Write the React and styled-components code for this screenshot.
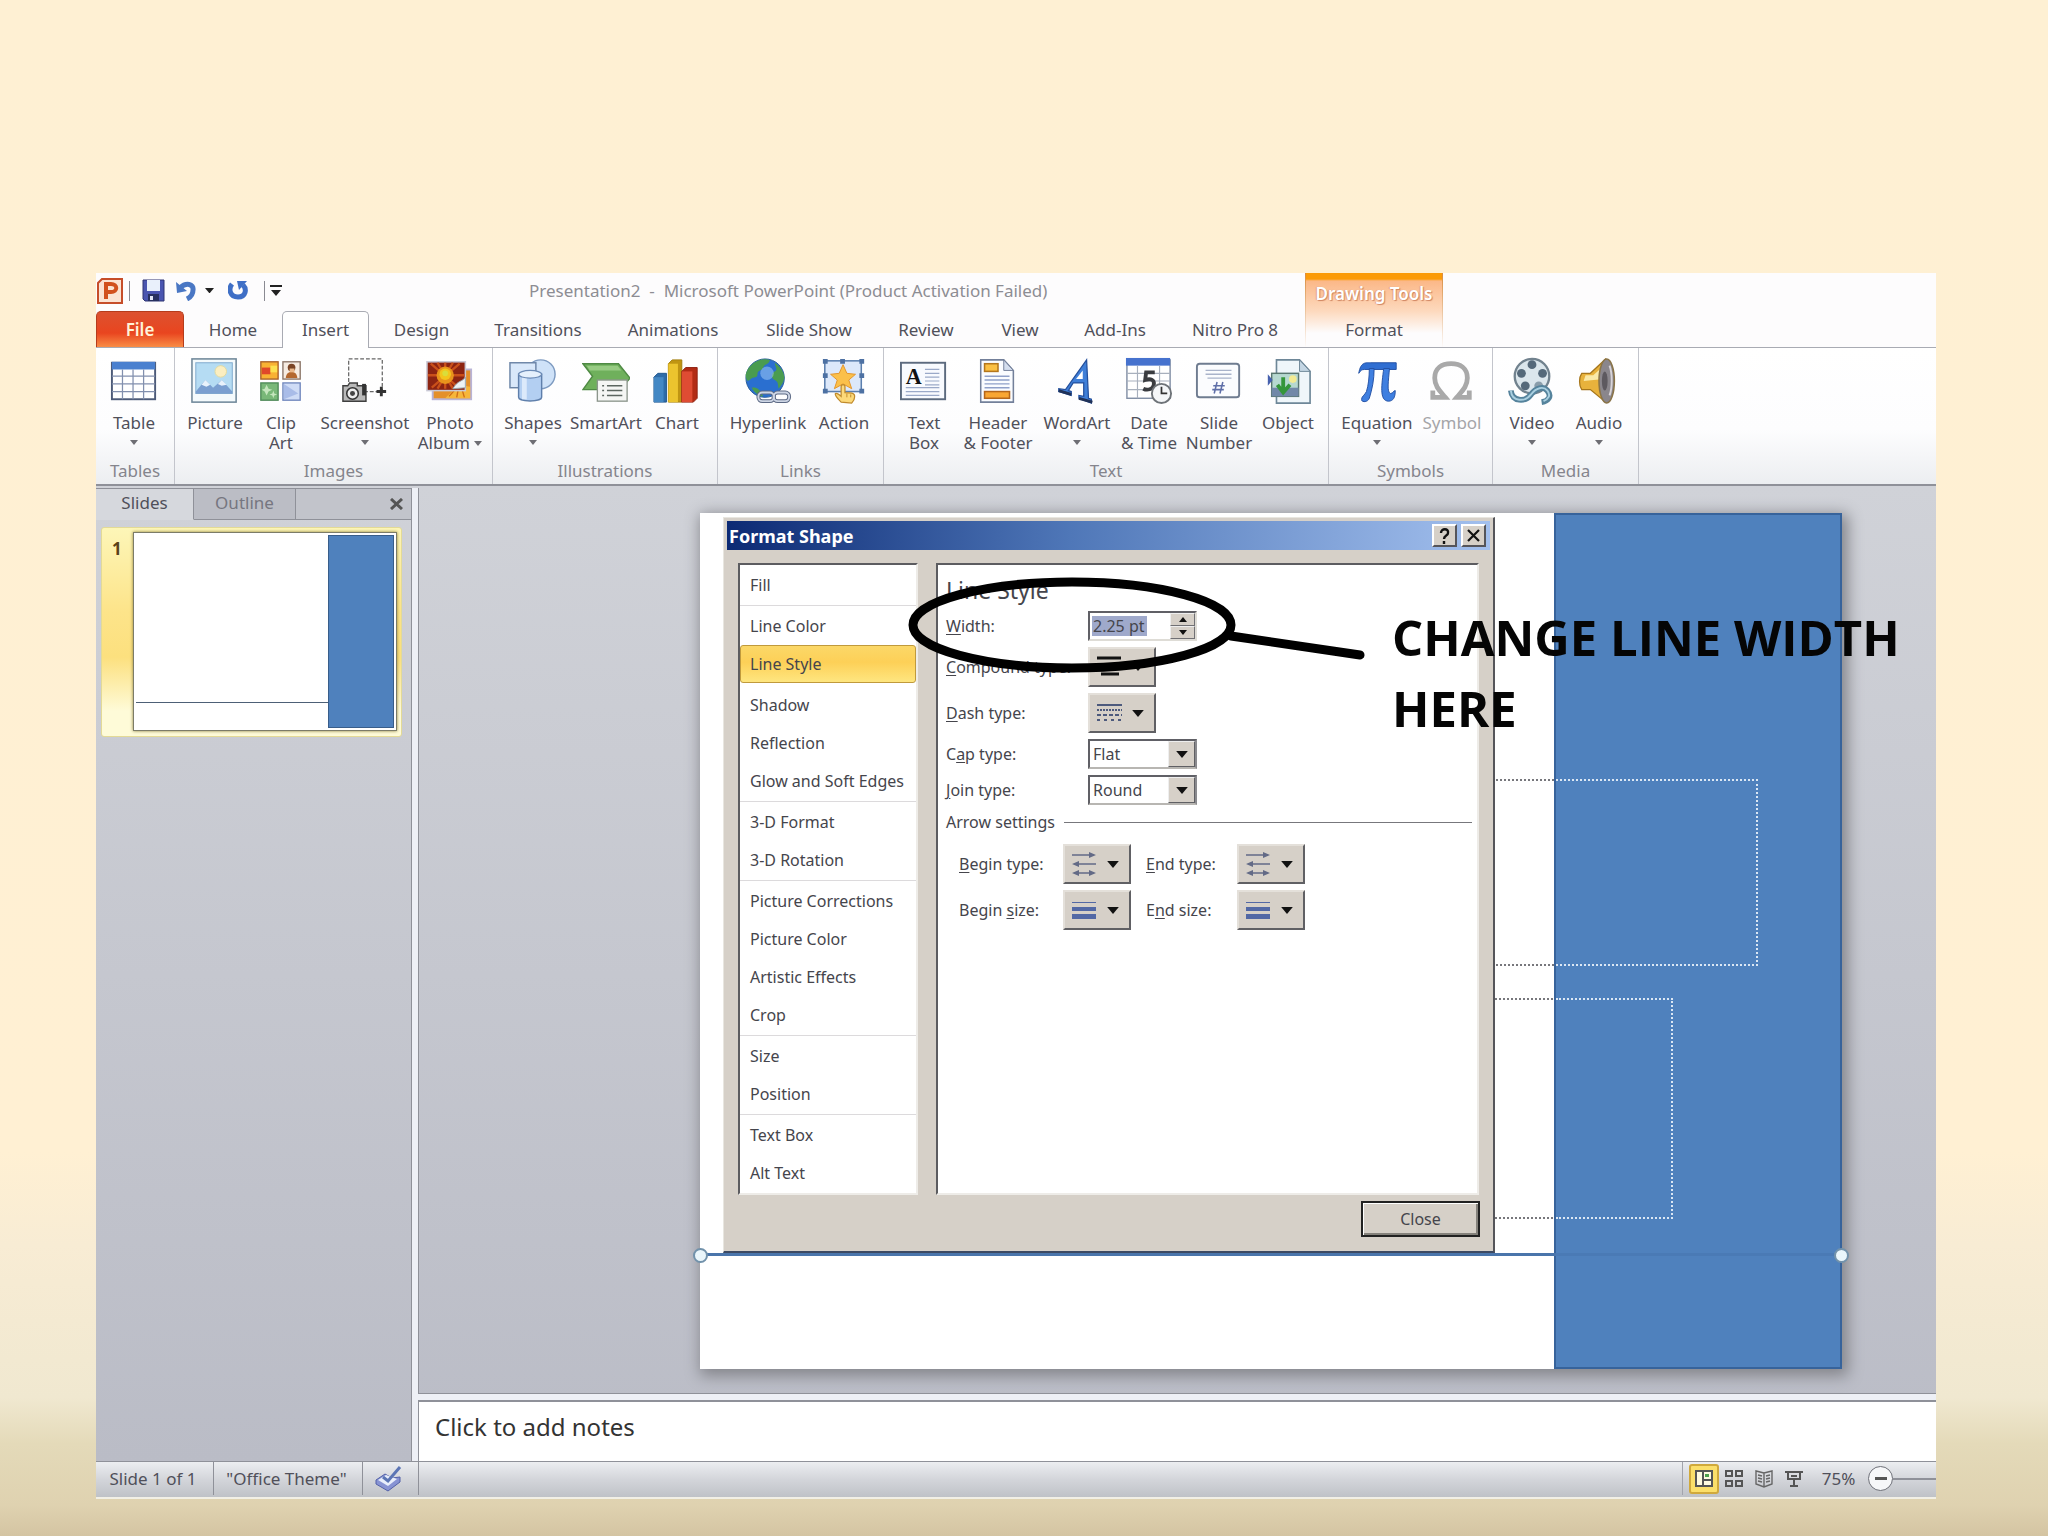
import React from 'react';
import styled, { createGlobalStyle } from 'styled-components';

const colors = {
  ink: '#50505a',
  muted: '#85858d',
  shape: '#4f81bd',
  shapeEdge: '#385d8a',
  face: '#d6d0c8',
  line: '#8f9199',
}

const tabs = [
  { name: 'Home', width: 98 },
  { name: 'Insert', width: 87, active: true },
  { name: 'Design', width: 105 },
  { name: 'Transitions', width: 128 },
  { name: 'Animations', width: 142 },
  { name: 'Slide Show', width: 130 },
  { name: 'Review', width: 104 },
  { name: 'View', width: 84 },
  { name: 'Add-Ins', width: 106 },
  { name: 'Nitro Pro 8', width: 134 },
]

const icons = {
  table: (
    <>
      <rect x="2" y="5" width="45" height="38" fill="#fff" stroke="#4c5a78" strokeWidth="2" />
      <rect x="2" y="4" width="45" height="8" fill="#4a80cf" />
      <path d="M2 19h45M2 27h45M2 35h45M13 12v31M24 12v31M35 12v31" stroke="#8290ae" strokeWidth="1.3" />
    </>
  ),
  picture: (
    <>
      <rect x="1" y="1" width="46" height="45" fill="#f4fafc" stroke="#6f8799" strokeWidth="1.6" />
      <rect x="5" y="5" width="38" height="32" fill="#b5dcf3" stroke="#7fa9cc" />
      <circle cx="31" cy="14" r="6" fill="#fbeec0" stroke="#e0d9a0" />
      <path d="M5 35l10-12 8 8 9-8 11 12v2H5z" fill="#7a9fd0" />
      <path d="M11 28l4-5 5 5-4 2zM28 27l4-4 5 5-5 1z" fill="#e8f2fb" />
    </>
  ),
  clipart: (
    <>
      <rect x="4" y="4" width="18" height="18" fill="#f9b233" stroke="#a8602a" strokeWidth="1.4" />
      <path d="M5 10h9v7H5z" fill="#e0482a" />
      <path d="M14 8h7v7h-7z" fill="#fde04f" />
      <rect x="27" y="4" width="18" height="18" fill="#f6ece2" stroke="#8a7466" strokeWidth="1.4" />
      <circle cx="36" cy="10" r="4" fill="#7b4526" />
      <path d="M30 21c0-9 12-9 12 0z" fill="#b4682f" />
      <path d="M34 11h5v4h-5z" fill="#e9b88b" />
      <rect x="4" y="26" width="18" height="18" fill="#79b878" stroke="#4e8a58" strokeWidth="1.4" />
      <path d="M10 28l2 4 4 1-4 2-2 4-2-4-3-2 3-1zM17 34l1 3 3 1-3 1-1 3-1-3-3-1 3-1z" fill="#c5e6bd" />
      <rect x="27" y="26" width="18" height="18" fill="#cfdcf6" stroke="#7187bd" strokeWidth="1.4" />
      <path d="M28 27l15 10-15 6z" fill="#a9bce8" />
    </>
  ),
  screenshot: (
    <>
      <rect x="8" y="1" width="35" height="34" fill="none" stroke="#666" strokeWidth="1.3" strokeDasharray="4 2" />
      <path d="M42 30v10M37 35h10" stroke="#333" strokeWidth="3" />
      <path d="M2 29h5l2-3h8v3h9v16H2z" fill="#b9b9b9" stroke="#3f3f3f" strokeWidth="1.5" />
      <path d="M22 27h4v12h-4z" fill="#333" />
      <circle cx="12" cy="37" r="6" fill="#eee" stroke="#333" strokeWidth="1.6" />
      <circle cx="12" cy="37" r="2.6" fill="#444" />
    </>
  ),
  album: (
    <>
      <rect x="7" y="12" width="40" height="31" fill="#e4902a" stroke="#b9b4d6" strokeWidth="2" />
      <path d="M20 42l14-14 12 2v12z" fill="#f6b63b" />
      <path d="M24 40l8-9M32 41l2-11M40 41l-3-10" stroke="#cf6e18" strokeWidth="1.4" />
      <rect x="1" y="4" width="40" height="30" fill="#8c2412" stroke="#c9c9d6" strokeWidth="1.6" />
      <path d="M20 5v27M2 18h38M5 6l29 25M35 6L6 31M12 5l16 27M28 5L12 32" stroke="#c9501a" strokeWidth="2.4" />
      <circle cx="20" cy="18" r="9" fill="#e8941c" />
      <circle cx="20" cy="17" r="6" fill="#f3c51c" />
      <circle cx="20" cy="16" r="3" fill="#d9dd3b" />
      <path d="M41 20c-3 5-8 3-13 12l13-1z" fill="#eef3f6" stroke="#9aa6ad" />
    </>
  ),
  shapes: (
    <>
      <circle cx="33" cy="17" r="15" fill="#cfe2f8" stroke="#7d9ac0" strokeWidth="1.5" />
      <rect x="1" y="5" width="27" height="26" fill="#d9e8fa" stroke="#6b84a6" strokeWidth="1.5" />
      <path d="M10 17v24c0 5 24 5 24 0V17z" fill="#b3cff2" stroke="#5f7fab" strokeWidth="1.5" />
      <path d="M16 20v23" stroke="#dceafb" strokeWidth="5" />
      <ellipse cx="22" cy="17" rx="12" ry="4" fill="#e5f0fc" stroke="#6c8bb6" strokeWidth="1.3" />
    </>
  ),
  smartart: (
    <>
      <path d="M1 6h37l12 15-10 12H1l10-14z" fill="#6fb05c" stroke="#4f8a44" strokeWidth="1.5" />
      <path d="M5 8h32l4 5H8z" fill="#97cb83" />
      <rect x="16" y="23" width="31" height="22" fill="#f5f6f4" stroke="#8c968c" strokeWidth="1.4" />
      <path d="M21 29h2M21 34h2M21 39h2M26 29h16M26 34h16M26 39h16" stroke="#5c6660" strokeWidth="1.6" />
    </>
  ),
  chart: (
    <>
      <path d="M1 20l4-4h9v30H1z" fill="#2f6ca8" stroke="#20588f" />
      <path d="M1 20h10v26H1z" fill="#4488c4" />
      <path d="M16 6l4-4h10v44H16z" fill="#c09512" stroke="#a37d0c" />
      <path d="M16 6h10v40H16z" fill="#ecc42e" />
      <path d="M30 14l4-4h12v32l-4 4H30z" fill="#b22c15" stroke="#8d2010" />
      <path d="M30 14h11v32H30z" fill="#df4c33" />
    </>
  ),
  hyperlink: (
    <>
      <circle cx="22" cy="21" r="20" fill="#2a6fd0" stroke="#285c96" />
      <path d="M7 8C12 2 22 0 27 2c-1 5-6 4-7 8s-6 2-6 7-4 2-7 5-4 2-5-2 2-9 5-12zM32 5c6 4 10 10 10 16-1 5-3 8-6 11-1-5 0-7-4-9s-4-7 0-9 0-5 0-9zM8 31c4-1 9 1 12 9-5 0-9-4-12-9z" fill="#4a9c50" />
      <circle cx="24" cy="16" r="7" fill="#9cc8f5" opacity="0.55" />
      <rect x="15" y="36" width="16" height="9" rx="4" fill="none" stroke="#5d6a85" strokeWidth="4" />
      <rect x="31" y="36" width="16" height="9" rx="4" fill="none" stroke="#5d6a85" strokeWidth="4" />
      <rect x="15" y="36" width="16" height="9" rx="4" fill="none" stroke="#cdd5e4" strokeWidth="2" />
      <rect x="31" y="36" width="16" height="9" rx="4" fill="none" stroke="#cdd5e4" strokeWidth="2" />
    </>
  ),
  action: (
    <>
      <rect x="5" y="3" width="38" height="32" fill="#dce8fa" stroke="#5b7fae" strokeWidth="1.6" />
      <path d="M24 7l4 9 9 1-7 6 3 9-9-5-9 5 3-9-7-6 9-1z" fill="#fbc04a" stroke="#e2942c" />
      <path d="M3 1h5v5H3zM21 1h5v5h-5zM41 1h5v5h-5zM3 16h5v5H3zM41 16h5v5h-5zM3 32h5v5H3zM41 32h5v5h-5z" fill="#4d71a3" />
      <path d="M22 46c-4-4-7-7-6-9 2-1 4 1 6 3V30c0-3 4-3 4 0v6c5 0 11 0 10 5 0 3-1 4-3 6z" fill="#fcd97a" stroke="#c08a2c" strokeWidth="1.3" />
      <path d="M28 37v4M32 38v3" stroke="#c08a2c" />
    </>
  ),
  textbox: (
    <>
      <rect x="1" y="5" width="46" height="38" fill="#f8fafe" stroke="#5c6a7e" strokeWidth="2" />
      <text x="6" y="27" fontFamily="Liberation Serif, serif" fontWeight="700" fontSize="23" fill="#111">A</text>
      <path d="M26 12h15M26 16h15M26 20h15M26 24h15M26 28h15M6 31h35M6 35h35M6 39h35" stroke="#9aa9c8" strokeWidth="1.3" />
    </>
  ),
  header: (
    <>
      <path d="M7 2h24l10 11v33H7z" fill="#fafcff" stroke="#73809a" strokeWidth="1.6" />
      <path d="M31 2v11h10z" fill="#d4deee" stroke="#73809a" />
      <rect x="11" y="6" width="14" height="8" fill="#fbc043" stroke="#b4761c" strokeWidth="1.6" />
      <path d="M11 19h26M11 23h26M11 27h26M11 31h26" stroke="#8fa0c9" strokeWidth="1.5" />
      <rect x="11" y="35" width="26" height="7" fill="#f9a633" stroke="#b4661c" strokeWidth="1.6" />
    </>
  ),
  wordart: (
    <>
      <path d="M35 2L13 33l-7-1v3l13 4v-4l-3-1 5-8h11v14l-5-1v3l13 5v-4l-3-1z" fill="#3f7fd8" stroke="#234f9c" strokeWidth="1.3" />
      <path d="M31 13v9h-7z" fill="#fff" />
      <path d="M6 34l13 4M27 42l14 4" stroke="#203258" strokeWidth="3" />
    </>
  ),
  date: (
    <>
      <rect x="2" y="2" width="45" height="40" fill="#fff" stroke="#8390a6" strokeWidth="1.5" />
      <rect x="1" y="0" width="46" height="8" fill="#4672ce" />
      <path d="M2 16h45M2 24h45M2 33h45M13 8v34M36 8v34" stroke="#a8b0bd" strokeWidth="1.2" />
      <path d="M31 15H22l-1 8c6-2 10 0 9 5-1 5-7 6-11 4" fill="none" stroke="#3a3c40" strokeWidth="4" />
      <circle cx="38" cy="37" r="10" fill="#f4f6f8" stroke="#6e7378" strokeWidth="2" />
      <path d="M38 30v7h6" fill="none" stroke="#333" strokeWidth="1.8" />
    </>
  ),
  number: (
    <>
      <rect x="2" y="6" width="44" height="35" rx="3" fill="#fbfcfe" stroke="#6f7c90" strokeWidth="2" />
      <path d="M11 13h27M11 17h27M13 21h25" stroke="#a9b3ca" strokeWidth="1.4" />
      <path d="M23 25l-3 12M29 25l-3 12M19 29h12M18 33h12" stroke="#5f6fa8" strokeWidth="1.6" />
    </>
  ),
  object: (
    <>
      <path d="M13 2h24l11 12v33H13z" fill="#eff6fa" stroke="#6e8798" strokeWidth="1.7" />
      <path d="M37 2v12h11z" fill="#c4d6e4" stroke="#6e8798" />
      <rect x="8" y="16" width="28" height="24" fill="#b6d8d0" stroke="#58766f" strokeWidth="1.5" />
      <path d="M8 31h28v9H8z" fill="#7188a8" />
      <circle cx="30" cy="22" r="4" fill="#f2eb93" />
      <path d="M20 20v14M14 28l6 8 7-8" fill="none" stroke="#34963a" strokeWidth="4" />
      <path d="M4 17l5 6-5 6z" fill="#4660ae" />
    </>
  ),
  equation: (
    <>
      <path d="M6 16C8 4 13 5 18 5h27v7H12c-3 0-4 1-6 4z" fill="#2f6ed2" stroke="#2350a4" />
      <path d="M17 11h5c0 12-2 21-5 31-2 5-9 4-8 1 0-3 3-4 5-8 2-6 3-15 3-24zM32 11h6c-1 12-3 25 1 26 3 0 3-3 5-3 0 7-2 11-7 11-10 0-7-18-5-34z" fill="#3f7fe0" stroke="#2350a4" />
    </>
  ),
  symbol: (
    <path d="M5 34v7h13c-5-6-11-11-11-20C7 11 14 6 24 6s17 5 17 15c0 9-6 14-11 20h13v-7" fill="none" stroke="#a9a9a9" strokeWidth="5" />
  ),
  video: (
    <>
      <circle cx="25" cy="19" r="18" fill="#dbe6ec" stroke="#71828e" strokeWidth="2.4" />
      <circle cx="25" cy="7" r="4.6" fill="#55697a" />
      <circle cx="14" cy="16" r="4.6" fill="#55697a" />
      <circle cx="36" cy="16" r="4.6" fill="#55697a" />
      <circle cx="18" cy="29" r="4.6" fill="#55697a" />
      <circle cx="32" cy="29" r="4.6" fill="#8a9daa" />
      <path d="M3 34c1 12 15 12 21 4 5-7 13-9 17-4 5 6 1 11-6 12" fill="none" stroke="#55839c" strokeWidth="6" />
      <path d="M3 34c1 12 15 12 21 4 5-7 13-9 17-4 4 5 1 9-4 11" fill="none" stroke="#a9cfe0" strokeWidth="2" />
    </>
  ),
  audio: (
    <>
      <path d="M7 16h9L32 1c8 8 9 34 0 45L16 33H7c-3-4-3-13 0-17z" fill="#e8b23c" stroke="#a6761c" strokeWidth="1.3" />
      <path d="M11 18h8L30 8v14L9 24z" fill="#fae9a7" />
      <ellipse cx="33" cy="24" rx="8" ry="23" fill="#8a868c" stroke="#8a7448" strokeWidth="1.6" />
      <ellipse cx="31" cy="24" rx="3" ry="10" fill="#5d595f" />
      <path d="M36 8c3 8 3 23 0 31" stroke="#d8d4d8" strokeWidth="2" fill="none" />
    </>
  ),
}

const groups = [
  { name: 'Tables', width: 79, pad: 3, items: [{ icon: 'table', label: ['Table'], width: 70, menu: true }] },
  {
    name: 'Images', width: 318, pad: 9, items: [
      { icon: 'picture', label: ['Picture'], width: 62 },
      { icon: 'clipart', label: ['Clip', 'Art'], width: 70 },
      { icon: 'screenshot', label: ['Screenshot'], width: 98, menu: true },
      { icon: 'album', label: ['Photo', 'Album'], width: 72, menu: true },
    ]
  },
  {
    name: 'Illustrations', width: 225, pad: 2, items: [
      { icon: 'shapes', label: ['Shapes'], width: 76, menu: true },
      { icon: 'smartart', label: ['SmartArt'], width: 70 },
      { icon: 'chart', label: ['Chart'], width: 72 },
    ]
  },
  {
    name: 'Links', width: 166, pad: 5, items: [
      { icon: 'hyperlink', label: ['Hyperlink'], width: 90 },
      { icon: 'action', label: ['Action'], width: 62 },
    ]
  },
  {
    name: 'Text', width: 445, pad: 2, items: [
      { icon: 'textbox', label: ['Text', 'Box'], width: 76 },
      { icon: 'header', label: ['Header', '& Footer'], width: 72 },
      { icon: 'wordart', label: ['WordArt'], width: 86, menu: true },
      { icon: 'date', label: ['Date', '& Time'], width: 58 },
      { icon: 'number', label: ['Slide', 'Number'], width: 82 },
      { icon: 'object', label: ['Object'], width: 56 },
    ]
  },
  {
    name: 'Symbols', width: 164, pad: 3, items: [
      { icon: 'equation', label: ['Equation'], width: 90, menu: true },
      { icon: 'symbol', label: ['Symbol'], width: 60, disabled: true },
    ]
  },
  {
    name: 'Media', width: 146, pad: 2, items: [
      { icon: 'video', label: ['Video'], width: 74, menu: true },
      { icon: 'audio', label: ['Audio'], width: 60, menu: true },
    ]
  },
]

const sections = [
  ['Fill'],
  ['Line Color', 'Line Style'],
  ['Shadow', 'Reflection', 'Glow and Soft Edges'],
  ['3-D Format', '3-D Rotation'],
  ['Picture Corrections', 'Picture Color', 'Artistic Effects', 'Crop'],
  ['Size', 'Position'],
  ['Text Box', 'Alt Text'],
]

const glyphs = {
  compound: <path d="M0 3h24M0 11h24M4 19h18" stroke="#111" strokeWidth="3" />,
  dash: (
    <g stroke="#4d5a7d" strokeWidth="2">
      <path d="M0 4h25" />
      <path d="M0 9h25" strokeDasharray="2 1" />
      <path d="M0 14h25" strokeDasharray="4 2" />
      <path d="M0 19h25" strokeDasharray="3 4" />
    </g>
  ),
  arrows: (
    <g stroke="#636a86" fill="#636a86" strokeWidth="1.6">
      <path d="M0 3h22M3 12h21M3 21h19" />
      <path d="M17 0l7 3-7 3zM7 9l-7 3 7 3zM7 18l-7 3 7 3zM17 18l7 3-7 3z" stroke="none" />
    </g>
  ),
  weights: (
    <g fill="#5268a5">
      <path d="M0 4h24v1H0zM0 9h24v4H0zM0 16h24v5H0z" />
    </g>
  ),
}

function Label({ text, hot, ...rest }) {
  const at = text.indexOf(hot);
  return (
    <FieldLabel {...rest}>
      {text.slice(0, at)}<u>{hot}</u>{text.slice(at + 1)}
    </FieldLabel>
  )
}

function Caret({ size = 9 }) {
  return (
    <svg width={size} height={size / 2 + 1} viewBox="0 0 10 6" aria-hidden="true">
      <path d="M0 0h10L5 6z" fill="currentColor" />
    </svg>
  )
}

function GlyphPicker({ id, glyph }) {
  return (
    <Picker id={id}>
      <svg width="26" height="24" viewBox="0 0 26 24" aria-hidden="true">{glyphs[glyph]}</svg>
      <Caret size={12} />
    </Picker>
  )
}

function Choice({ id, value }) {
  return (
    <ChoiceBox>
      <select id={id} defaultValue={value}><option>{value}</option></select>
      <ChoiceArrow><Caret size={12} /></ChoiceArrow>
    </ChoiceBox>
  )
}

function RibbonItem({ icon, label, width, menu, disabled }) {
  const inline = menu && label.length > 1;
  return (
    <Tool $width={width} disabled={disabled}>
      <svg width="48" height="48" viewBox="0 0 50 48" aria-hidden="true">{icons[icon]}</svg>
      {label.map((line, i) => (
        <span key={line}>{line}{inline && i === 1 && <> <Caret size={8} /></>}</span>
      ))}
      {menu && !inline && <Caret size={8} />}
    </Tool>
  )
}

function TitleBar() {
  return (
    <Title>
      <Quick>
        <QuickButton aria-label="PowerPoint" $width={26}>
          <svg width="26" height="26" viewBox="0 0 26 26">
            <path d="M5 1h20v24H1V5z" fill="#fbe3d3" stroke="#c64d29" strokeWidth="2" />
            <path d="M9 21V6h5c7 0 7 8 0 8h-4" fill="none" stroke="#d2501d" strokeWidth="4" />
          </svg>
        </QuickButton>
        <Bar />
        <QuickButton aria-label="Save" $width={38}>
          <svg width="23" height="23" viewBox="0 0 23 23">
            <path d="M1 1h21v21H3l-2-2z" fill="#4a55b0" stroke="#2e3573" />
            <path d="M5 1h13v11H5z" fill="#e9f0fb" />
            <path d="M6 15h11v7H6z" fill="#27305f" />
            <path d="M8 17h3v4H8z" fill="#e2e7f5" />
          </svg>
        </QuickButton>
        <QuickButton aria-label="Undo" $width={28}>
          <svg width="20" height="20" viewBox="0 0 20 20">
            <path d="M4 7c6-6 14-4 13 2 0 4-2 7-6 9" fill="none" stroke="#4a77c4" strokeWidth="5" />
            <path d="M0 1l1 11 10-2z" fill="#4a77c4" />
          </svg>
        </QuickButton>
        <QuickButton aria-label="Undo history" $width={18}><Caret size={9} /></QuickButton>
        <QuickButton aria-label="Repeat" $width={40}>
          <svg width="20" height="21" viewBox="0 0 20 21">
            <path d="M4 4c-4 5-2 13 6 13s9-8 5-12" fill="none" stroke="#3f6fc6" strokeWidth="5" />
            <path d="M9 1h10l-8 9z" fill="#3f6fc6" />
          </svg>
        </QuickButton>
        <Bar />
        <QuickButton aria-label="Customize" $width={14}>
          <svg width="12" height="12" viewBox="0 0 12 12">
            <path d="M0 0h12v2H0zM1 5h10l-5 6z" fill="#222" />
          </svg>
        </QuickButton>
      </Quick>
      <Caption>Presentation2&nbsp; -&nbsp; Microsoft PowerPoint (Product Activation Failed)</Caption>
    </Title>
  )
}

function Ribbon() {
  return (
    <>
      <Tabs>
        <FileTab>File</FileTab>
        {tabs.map(tab => <Tab key={tab.name} $width={tab.width} $active={tab.active}>{tab.name}</Tab>)}
        <ToolTab>
          <strong>Drawing Tools</strong>
          <Tab $width={136}>Format</Tab>
        </ToolTab>
      </Tabs>
      <Groups>
        {groups.map(group => (
          <Group key={group.name} $width={group.width}>
            <Tools $pad={group.pad}>
              {group.items.map(item => <RibbonItem key={item.icon} {...item} />)}
            </Tools>
            <GroupName>{group.name}</GroupName>
          </Group>
        ))}
      </Groups>
    </>
  )
}

function Thumbnails() {
  return (
    <Side>
      <SideTabs>
        <SideTab $width={98} $active>Slides</SideTab>
        <SideTab $width={102}>Outline</SideTab>
        <SideClose aria-label="Close pane">
          <svg width="13" height="12" viewBox="0 0 13 12"><path d="M1 1l11 10M12 1L1 11" stroke="#555" strokeWidth="3" /></svg>
        </SideClose>
      </SideTabs>
      <Thumb>
        <b>1</b>
        <Mini>
          <MiniLine />
          <MiniShape />
        </Mini>
      </Thumb>
    </Side>
  )
}

function FormatDialog() {
  return (
    <Dialog role="dialog" aria-label="Format Shape">
      <DialogTitle>
        <h2>Format Shape</h2>
        <DialogIcon aria-label="Help">
          <svg width="11" height="16" viewBox="0 0 11 16"><path d="M2 5c0-5 8-5 7 0 0 3-4 2-4 6M5 13v3" fill="none" stroke="#111" strokeWidth="2.4" /></svg>
        </DialogIcon>
        <DialogIcon aria-label="Close dialog">
          <svg width="13" height="13" viewBox="0 0 13 13"><path d="M1 1l11 11M12 1L1 12" stroke="#111" strokeWidth="2.2" /></svg>
        </DialogIcon>
      </DialogTitle>
      <DialogBody>
        <List>
          {sections.map((names, i) => (
            <Section key={names[0]} $plain={i === 1}>
              {names.map(name => <Entry key={name} $selected={name === 'Line Style'}>{name}</Entry>)}
            </Section>
          ))}
        </List>
        <Panel>
          <h3>Line Style</h3>
          <Field>
            <Label text="Width:" hot="W" htmlFor="width" />
            <Spin>
              <input id="width" defaultValue="2.25 pt" />
              <div>
                <button aria-label="Increase"><Caret size={8} /></button>
                <button aria-label="Decrease"><Caret size={8} /></button>
              </div>
            </Spin>
          </Field>
          <Field $tall>
            <Label text="Compound type:" hot="C" htmlFor="compound" />
            <GlyphPicker id="compound" glyph="compound" />
          </Field>
          <Field $tall>
            <Label text="Dash type:" hot="D" htmlFor="dash" />
            <GlyphPicker id="dash" glyph="dash" />
          </Field>
          <Field>
            <Label text="Cap type:" hot="a" htmlFor="cap" />
            <Choice id="cap" value="Flat" />
          </Field>
          <Field>
            <Label text="Join type:" hot="J" htmlFor="join" />
            <Choice id="join" value="Round" />
          </Field>
          <Divider>Arrow settings</Divider>
          <ArrowGrid>
            <Label text="Begin type:" hot="B" htmlFor="begin-type" />
            <GlyphPicker id="begin-type" glyph="arrows" />
            <Label text="End type:" hot="E" htmlFor="end-type" />
            <GlyphPicker id="end-type" glyph="arrows" />
            <Label text="Begin size:" hot="s" htmlFor="begin-size" />
            <GlyphPicker id="begin-size" glyph="weights" />
            <Label text="End size:" hot="n" htmlFor="end-size" />
            <GlyphPicker id="end-size" glyph="weights" />
          </ArrowGrid>
        </Panel>
      </DialogBody>
      <DialogFoot><CloseButton>Close</CloseButton></DialogFoot>
    </Dialog>
  )
}

function StatusBar() {
  return (
    <Status>
      <StatusCell $width={118}>Slide 1 of 1</StatusCell>
      <StatusCell $width={149}>"Office Theme"</StatusCell>
      <StatusCell $width={56}>
        <svg width="28" height="26" viewBox="0 0 28 26" aria-hidden="true">
          <path d="M1 14l9-6 7 4 8-1v5l-12 9L1 18z" fill="#8793d3" stroke="#5361a8" />
          <path d="M3 14l8-5 11 4-9 7z" fill="#e8eefb" />
          <path d="M8 11l5 4L25 1" fill="none" stroke="#5b75b5" strokeWidth="3" />
        </svg>
      </StatusCell>
      <Views>
        <ViewButton aria-label="Normal" $active>
          <svg width="18" height="17" viewBox="0 0 18 17"><path d="M1 1h16v15H1zM8 1v15M8 10h9" fill="#fffbe0" stroke="#555" strokeWidth="2" /><path d="M10 4h4v3h-4z" fill="#4ca04c" /></svg>
        </ViewButton>
        <ViewButton aria-label="Slide sorter">
          <svg width="18" height="17" viewBox="0 0 18 17"><path d="M1 1h6v5H1zM11 1h6v5h-6zM1 11h6v5H1zM11 11h6v5h-6z" fill="none" stroke="#555" strokeWidth="2" /></svg>
        </ViewButton>
        <ViewButton aria-label="Reading view">
          <svg width="18" height="18" viewBox="0 0 18 18"><path d="M9 3L1 1v13l8 3 8-3V1zv14M3 5l4 1M3 8l4 1M3 11l4 1M15 5l-4 1M15 8l-4 1M15 11l-4 1" fill="none" stroke="#666" strokeWidth="1.4" /></svg>
        </ViewButton>
        <ViewButton aria-label="Slide show">
          <svg width="18" height="18" viewBox="0 0 18 18"><path d="M0 2h18M3 2v7h12V2M6 6h6M9 9v7M5 16h8" fill="none" stroke="#555" strokeWidth="2" /></svg>
        </ViewButton>
        <Percent>75%</Percent>
        <ZoomOut aria-label="Zoom out">
          <svg width="12" height="3" viewBox="0 0 12 3"><path d="M0 0h12v3H0z" fill="#555" /></svg>
        </ZoomOut>
        <Track />
      </Views>
    </Status>
  )
}

function App() {
  return (
    <Page>
      <Global />
      <Window>
        <TitleBar />
        <Ribbon />
        <Body>
          <Thumbnails />
          <Main>
            <Canvas>
              <Slide>
                <Placeholder $top={266} $right={84} $height={187} />
                <Placeholder $top={485} $right={169} $height={221} />
                <BlueShape>
                  <Dots $top={264} $right={82} $height={187} />
                  <Dots $top={483} $right={167} $height={221} />
                </BlueShape>
                <Rule />
                <FormatDialog />
                <Handle $side="left" />
                <Handle $side="right" />
                <Mark width="470" height="110" viewBox="0 0 470 110" aria-hidden="true">
                  <ellipse cx="168" cy="53" rx="159" ry="43" />
                  <path d="M327 64l129 19" strokeLinecap="round" />
                </Mark>
                <Callout>CHANGE LINE WIDTH<br />HERE</Callout>
              </Slide>
            </Canvas>
            <Notes aria-label="Notes" defaultValue="Click to add notes" />
          </Main>
        </Body>
        <StatusBar />
      </Window>
    </Page>
  )
}

const Global = createGlobalStyle`
  * {
    box-sizing: border-box;
  }

  body {
    margin: 0;
    font: 17px/20px 'Noto Sans', sans-serif;
    color: ${colors.ink};
  }

  button, input, select, textarea {
    margin: 0;
    padding: 0;
    border: 0;
    border-radius: 0;
    background: none;
    font: inherit;
    color: inherit;
  }

  h2, h3 {
    margin: 0;
  }
`

const Page = styled.div`
  min-height: 100vh;
  padding: 273px 112px 37px 96px;
  display: flex;
  overflow: hidden;
  background: linear-gradient(#fef0d3 0, #fff0d3 75%, #f8ecd4 81%, #f0e8d0 91%, #e4dab9 94%, #dfd2b0 98%, #d4c4a2 100%);
`

const Window = styled.div`
  flex: 1;
  min-width: 0;
  display: flex;
  flex-direction: column;
  background: #fdfcfd;
  border-bottom: 2px solid #f2f0e6;
`

const Title = styled.div`
  height: 38px;
  display: flex;
  align-items: flex-start;
`

const Quick = styled.div`
  width: 433px;
  height: 35px;
  padding-left: 1px;
  display: flex;
  align-items: center;
`

const QuickButton = styled.button`
  width: ${props => props.$width}px;
  height: 28px;
  display: flex;
  align-items: center;
  justify-content: center;
  color: #222;
`

const Bar = styled.i`
  width: 1px;
  height: 20px;
  margin: 0 4px 0 6px;
  background: #8a8a92;
`

const Caption = styled.div`
  padding-top: 8px;
  color: #8d8d93;
  white-space: nowrap;
`

const Tabs = styled.div`
  height: 37px;
  display: flex;
  border-bottom: 1px solid #a9abb3;
`

const Tab = styled.button`
  width: ${props => props.$width}px;
  height: 37px;
  white-space: nowrap;
  border: 1px solid transparent;
  border-bottom: 0;

  ${props => props.$active && `
    background: #fff;
    border-color: #a9abb3;
    border-radius: 5px 5px 0 0;
  `}
`

const FileTab = styled.button`
  width: 88px;
  height: 36px;
  border: 1px solid #b53c1c;
  border-bottom: 0;
  border-radius: 5px 5px 0 0;
  background: linear-gradient(#dc5230, #e9451f 60%, #f98d46);
  color: #fff3d8;
  font-weight: 600;
`

const ToolTab = styled.div`
  width: 138px;
  height: 74px;
  margin: -38px 0 0 3px;
  padding-top: 6px;
  border: 1px solid;
  border-width: 0 1px;
  border-image: linear-gradient(#d98a3a, #fdfcfd) 1;
  background: linear-gradient(#fb9b08 0, #fb9b08 6px, #fbb888 8px, #fdd9bd 38px, #fdfcfd 60px);

  strong {
    display: block;
    height: 32px;
    line-height: 30px;
    font-weight: 600;
    text-align: center;
    color: #fff;
    text-shadow: 1px 1px 1px #d08560, -1px 0 1px #e0a080;
  }
`

const Groups = styled.div`
  height: 138px;
  display: flex;
  background: linear-gradient(#fff, #fdfdfe 60%, #eceef1);
  border-bottom: 2px solid ${colors.line};
`

const Group = styled.div`
  width: ${props => props.$width}px;
  display: flex;
  flex-direction: column;
  border-right: 1px solid #c3c5cc;
`

const Tools = styled.div`
  height: 113px;
  padding: 9px 0 0 ${props => props.$pad}px;
  display: flex;
`

const Tool = styled.button`
  width: ${props => props.$width}px;
  flex: none;
  display: flex;
  flex-direction: column;
  align-items: center;
  white-space: nowrap;

  span:first-of-type {
    margin-top: 8px;
  }

  span svg {
    vertical-align: 3px;
    color: #6e6e74;
  }

  > svg:last-child {
    margin-top: 7px;
    color: #6e6e74;
  }

  &:disabled {
    color: #a5a5a9;
  }
`

const GroupName = styled.div`
  text-align: center;
  color: ${colors.muted};
`

const Body = styled.div`
  flex: 1;
  display: flex;
  padding-top: 2px;
  background: linear-gradient(#d0d2d8, #babcc6);
`

const Side = styled.div`
  width: 316px;
  border-right: 1px solid ${colors.line};
`

const SideTabs = styled.div`
  height: 32px;
  display: flex;
  background: #c2c4cb;
  border-top: 1px solid ${colors.line};
`

const SideTab = styled.button`
  width: ${props => props.$width}px;
  padding-bottom: 2px;
  background: ${props => props.$active ? '#d6d8dd' : '#bbbdc5'};
  color: ${props => props.$active ? colors.ink : '#767680'};
  border-right: 1px solid ${colors.line};
  border-bottom: 1px solid ${props => props.$active ? '#d6d8dd' : colors.line};
`

const SideClose = styled.button`
  flex: 1;
  padding-right: 8px;
  text-align: right;
  border-bottom: 1px solid ${colors.line};
`

const Thumb = styled.div`
  height: 210px;
  margin: 7px 9px 0 5px;
  padding: 4px 4px 5px 10px;
  display: flex;
  justify-content: space-between;
  border: 1px solid #e3da96;
  border-radius: 3px;
  background: linear-gradient(#fdf6b8, #fde48a 40%, #fce07e 62%, #fefbd8 88%);

  b {
    padding-top: 7px;
    color: #5a4218;
  }
`

const Mini = styled.div`
  position: relative;
  width: 264px;
  border: 1px solid #7c7c68;
  background: #fff;
  box-shadow: 0 0 3px #8a7c3c;
`

const MiniLine = styled.i`
  position: absolute;
  top: 86%;
  left: 2px;
  right: 2px;
  height: 1px;
  background: #4d6076;
`

const MiniShape = styled.i`
  position: absolute;
  inset: 2px 2px 2px auto;
  width: 66px;
  background: ${colors.shape};
  border: 1px solid ${colors.shapeEdge};
`

const Main = styled.div`
  flex: 1;
  min-width: 0;
  display: flex;
  flex-direction: column;
  border-left: 6px solid #eef0f6;
`

const Canvas = styled.div`
  flex: 1;
  display: flex;
  padding: 25px 94px 24px 281px;
  border-left: 1px solid ${colors.line};
  border-bottom: 1px solid ${colors.line};
`

const Slide = styled.div`
  position: relative;
  flex: 1;
  background: #fff;
  box-shadow: 3px 4px 14px 3px #85868c;
`

const Placeholder = styled.div`
  position: absolute;
  left: 100px;
  top: ${props => props.$top}px;
  right: ${props => props.$right}px;
  height: ${props => props.$height}px;
  border: 2px dotted #77777c;
`

const BlueShape = styled.div`
  position: absolute;
  inset: 0 0 0 auto;
  width: 288px;
  background: ${colors.shape};
  border: 2px solid #37639b;
`

const Dots = styled(Placeholder)`
  left: 0;
  border-color: #dbe7f4;
  border-left: 0;
`

const Rule = styled.i`
  position: absolute;
  top: 740px;
  left: 0;
  right: 0;
  height: 3px;
  background: linear-gradient(90deg, #4a75ab 75%, #4a7ab5 75%);
`

const Handle = styled.i`
  position: absolute;
  top: 735px;
  ${props => props.$side}: -7px;
  width: 15px;
  height: 15px;
  border-radius: 50%;
  border: 2px solid #7292ab;
  background: #eaf6fb;
`

const Dialog = styled.div`
  position: absolute;
  left: 23px;
  top: 4px;
  width: 772px;
  height: 736px;
  padding: 3px;
  background: ${colors.face};
  border: 1px solid #e8e6e0;
  border-right: 2px solid #55555a;
  border-bottom: 2px solid #3d4a62;
  font-size: 16px;
  color: #45454c;
`

const DialogTitle = styled.div`
  height: 29px;
  padding-right: 4px;
  display: flex;
  align-items: center;
  gap: 4px;
  background: linear-gradient(90deg, #0c2a74, #4f77b8 45%, #a3c0ee);

  h2 {
    flex: 1;
    padding-left: 2px;
    font-size: 18px;
    font-weight: 700;
    color: #fff;
  }
`

const DialogIcon = styled.button`
  width: 25px;
  height: 23px;
  display: flex;
  align-items: center;
  justify-content: center;
  background: ${colors.face};
  border: 2px solid;
  border-color: #fff #55555a #55555a #fff;
`

const DialogBody = styled.div`
  padding: 13px 11px 0;
  display: flex;
  gap: 18px;
`

const List = styled.div`
  width: 180px;
  height: 632px;
  padding-top: 1px;
  background: #fff;
  border: 2px solid;
  border-color: #5c5c60 #eeece8 #eeece8 #5c5c60;
`

const Section = styled.div`
  padding-bottom: 1px;
  margin-bottom: 1px;
  border-bottom: 1px solid ${props => props.$plain ? '#fff' : '#dcdadc'};

  &:last-child {
    margin: 0;
    border-bottom: 0;
  }
`

const Entry = styled.button`
  width: 100%;
  height: 38px;
  padding-left: ${props => props.$selected ? 9 : 10}px;
  display: block;
  text-align: left;
  white-space: nowrap;

  ${props => props.$selected && `
    background: linear-gradient(#fbd868, #fdd057 45%, #fee680);
    border: 1px solid #c09a3c;
    border-radius: 3px;
  `}
`

const Panel = styled.div`
  flex: 1;
  height: 632px;
  padding: 0 5px 0 8px;
  background: #fff;
  border: 2px solid;
  border-color: #5c5c60 #eeece8 #eeece8 #5c5c60;

  h3 {
    height: 43px;
    line-height: 50px;
    font-size: 23px;
    font-weight: 400;
  }
`

const Field = styled.div`
  height: ${props => props.$tall ? 46 : 36}px;
  display: grid;
  grid-template-columns: 142px auto;
  align-items: center;
  justify-content: start;
`

const FieldLabel = styled.label`
  white-space: nowrap;

  u {
    text-underline-offset: 2px;
  }
`

const Spin = styled.div`
  width: 109px;
  height: 30px;
  display: flex;
  border: 2px solid;
  border-color: #606066 #dedcd6 #dedcd6 #606066;

  input {
    width: 80px;
    padding-left: 3px;
    background: linear-gradient(#9fa9cb, #9fa9cb) 2px 3px / 55px 20px no-repeat;
  }

  div {
    flex: 1;
    display: grid;
  }

  button {
    display: flex;
    align-items: center;
    justify-content: center;
    color: #111;
    background: ${colors.face};
    border: 1px solid;
    border-color: #eee #707074 #707074 #eee;
  }

  button:first-child svg {
    transform: rotate(180deg);
  }
`

const Picker = styled.button`
  width: 68px;
  height: 40px;
  padding-left: 7px;
  display: flex;
  align-items: center;
  gap: 9px;
  color: #111;
  background: ${colors.face};
  border: 2px solid;
  border-color: #e4e0da #606064 #606064 #e4e0da;
`

const ChoiceBox = styled.div`
  position: relative;
  width: 109px;
  height: 30px;

  select {
    width: 100%;
    height: 100%;
    padding-left: 3px;
    appearance: none;
    background: #fff;
    border: 2px solid;
    border-color: #606066 #8a8a8e #b8b6b2 #606066;
  }
`

const ChoiceArrow = styled.i`
  position: absolute;
  inset: 2px 2px 2px auto;
  width: 27px;
  display: flex;
  align-items: center;
  justify-content: center;
  pointer-events: none;
  color: #111;
  background: ${colors.face};
  border: 1px solid;
  border-color: #eee #606064 #606064 #eee;
`

const Divider = styled.div`
  height: 28px;
  display: flex;
  align-items: center;
  gap: 9px;

  &::after {
    content: '';
    flex: 1;
    height: 1px;
    background: #77777c;
  }
`

const ArrowGrid = styled.div`
  padding: 5px 0 0 13px;
  display: grid;
  grid-template-columns: 104px 83px 91px 68px;
  grid-auto-rows: 46px;
  align-items: center;
`

const DialogFoot = styled.div`
  padding: 6px 10px 0;
  display: flex;
  justify-content: flex-end;
`

const CloseButton = styled.button`
  width: 119px;
  height: 36px;
  background: ${colors.face};
  border: 2px solid #222;
  box-shadow: inset 1px 1px #fff, inset -2px -2px #85827c;
`

const Mark = styled.svg`
  position: absolute;
  left: 204px;
  top: 59px;
  fill: none;
  stroke: #000;
  stroke-width: 9px;
`

const Callout = styled.div`
  position: absolute;
  left: 692px;
  top: 89px;
  font: 700 49px/71px 'Open Sans', sans-serif;
  color: #050505;
  white-space: nowrap;
`

const Notes = styled.textarea`
  height: 61px;
  margin-top: 6px;
  padding: 8px 16px;
  display: block;
  resize: none;
  overflow: hidden;
  background: #fff;
  border-top: 2px solid ${colors.line};
  border-left: 1px solid ${colors.line};
  box-shadow: 0 -6px #eef0f6;
  font-size: 24px;
  line-height: 34px;
  color: #333;
`

const Status = styled.div`
  height: 36px;
  display: flex;
  border-top: 1px solid #8f9199;
  background: linear-gradient(#eceef1, #d3d5da 50%, #bfc2c7);
`

const StatusCell = styled.div`
  width: ${props => props.$width}px;
  margin-bottom: 2px;
  padding-right: 3px;
  display: flex;
  align-items: center;
  justify-content: center;
  border-right: 1px solid #8f9199;
  white-space: nowrap;
`

const Views = styled.div`
  margin-left: auto;
  padding-left: 6px;
  margin-bottom: 2px;
  display: flex;
  align-items: center;
  border-left: 1px solid #a2a4ac;
`

const ViewButton = styled.button`
  width: 30px;
  height: 30px;
  display: flex;
  align-items: center;
  justify-content: center;

  ${props => props.$active && `
    background: #fbdf6a;
    border: 2px solid #d0a93c;
    border-radius: 3px;
  `}
`

const Percent = styled.button`
  width: 59px;
`

const ZoomOut = styled.button`
  width: 25px;
  height: 25px;
  display: flex;
  align-items: center;
  justify-content: center;
  border: 1px solid #6e7078;
  border-radius: 50%;
  background: #f6f7f9;
`

const Track = styled.i`
  width: 43px;
  height: 2px;
  background: #8f9199;
`

export default App;
